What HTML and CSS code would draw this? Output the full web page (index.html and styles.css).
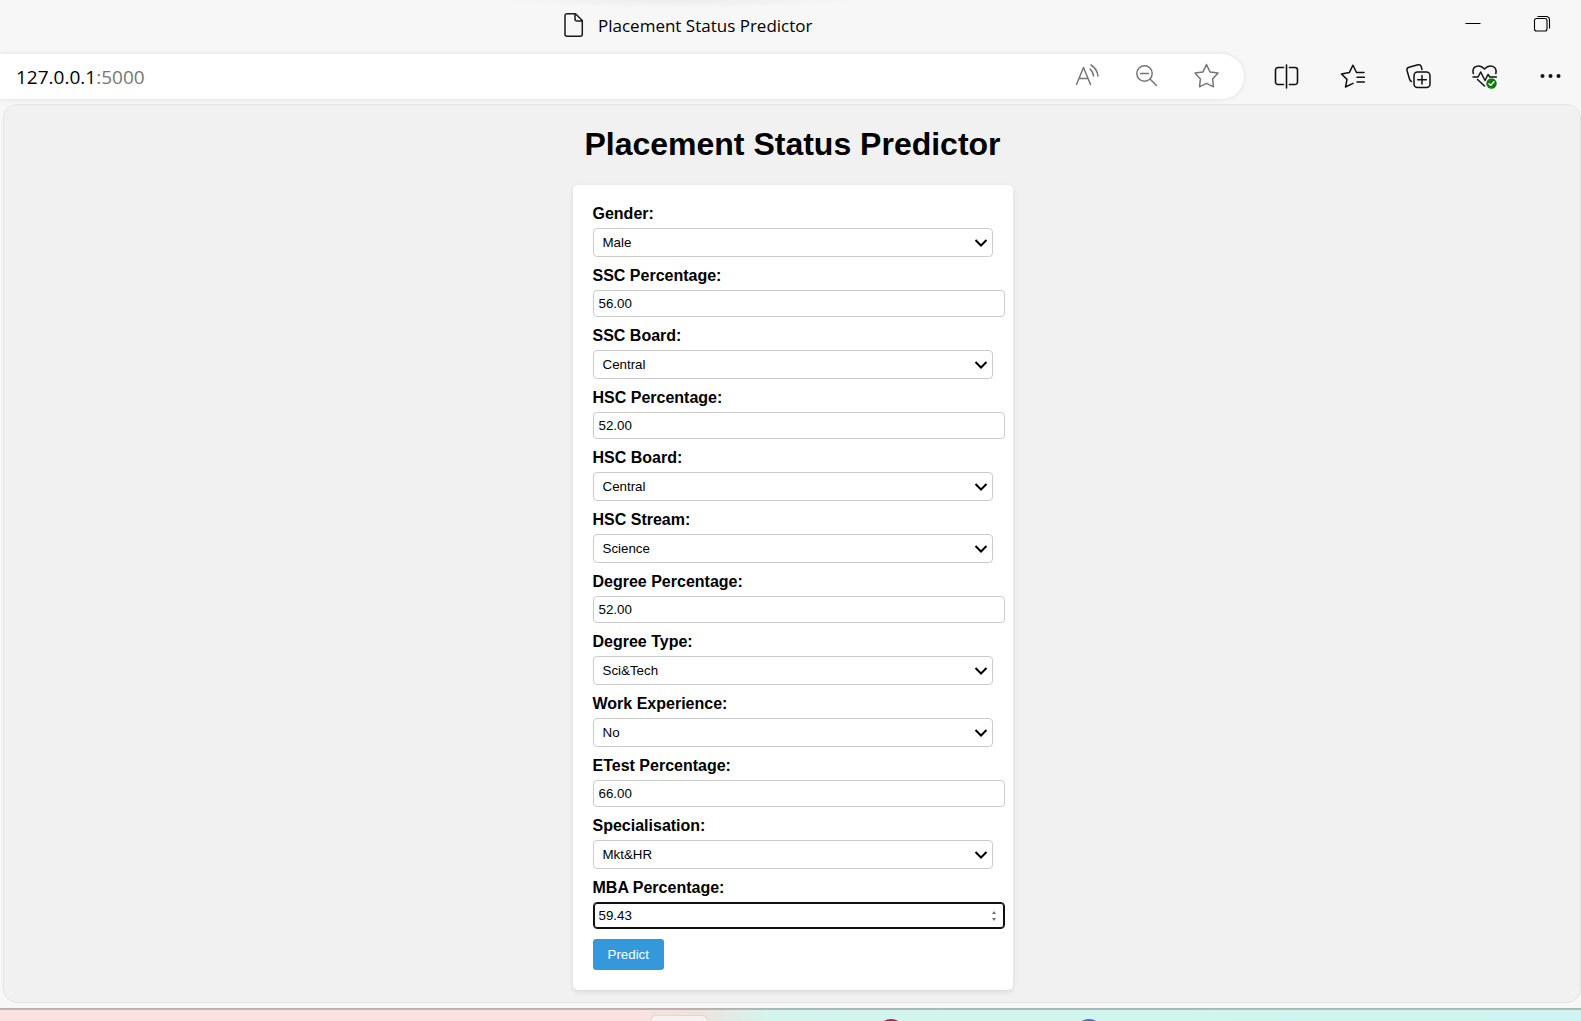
FILE: index.html
```html
<!DOCTYPE html>
<html lang="en">
<head>
<meta charset="utf-8">
<title>Placement Status Predictor</title>
<link rel="stylesheet" href="styles.css">
</head>
<body>
<header class="browser">
  <div class="titlebar">
    <div class="tab">
      <svg width="20" height="26" viewBox="0 0 20 26" fill="none" stroke="#1b1b1b" stroke-width="1.5" stroke-linejoin="round"><path d="M3 1.7H11.5L18.3 8.5V22.3A2 2 0 0 1 16.300 24.300H3A2 2 0 0 1 1 22.300V3.700A2 2 0 0 1 3 1.700ZM11 1.700V7A2 2 0 0 0 13 9H18.300"/></svg>
      <span>Placement Status Predictor</span>
    </div>
    <div class="window-buttons">
      <button type="button" aria-label="Minimize"><svg width="18" height="18" viewBox="0 0 18 18"><path d="M1.500 8.500H16.500" stroke="#000"/></svg></button>
      <button type="button" aria-label="Restore"><svg width="18" height="18" viewBox="0 0 18 18" fill="none" stroke="#000" stroke-width="1.100"><rect x="1.500" y="3.500" width="12.500" height="12.500" rx="2"/><path d="M4.500 1.500H13A3.500 3.500 0 0 1 16.500 5V13.500"/></svg></button>
    </div>
  </div>
  <div class="toolbar">
    <div class="address">
      <div class="url">127.0.0.1<span class="port">:5000</span></div>
      <button type="button" aria-label="Read aloud"><svg width="26" height="26" viewBox="0 0 26 26" fill="none" stroke="#767676" stroke-width="1.500" stroke-linecap="round" stroke-linejoin="round"><path d="M2.500 21.500L9.500 4.500L16.500 21.500M5 15.500H14M16 6Q19 8.500 19.500 13M17 2Q23 5.500 24 13"/></svg></button>
      <button type="button" aria-label="Zoom out"><svg width="26" height="26" viewBox="0 0 26 26" fill="none" stroke="#767676" stroke-width="1.500" stroke-linecap="round"><circle cx="10.500" cy="10.500" r="7.700"/><path d="M6.500 10.500H14.500M16 16L22.500 22.500"/></svg></button>
      <button type="button" aria-label="Add to favorites"><svg width="26" height="26" viewBox="0 0 26 26" fill="none" stroke="#767676" stroke-width="1.500" stroke-linejoin="round"><path d="M12.500 1.500L16 8.900L24 10.100L18.600 16L19.500 23.800L12.500 20.300L5.500 23.800L6.400 16L1 10.100L9 8.900Z"/></svg></button>
    </div>
    <nav class="tools" aria-label="Browser tools">
      <button type="button" aria-label="Split screen"><svg width="26" height="26" viewBox="0 0 26 26" fill="none" stroke="#111" stroke-width="1.600" stroke-linecap="round"><path d="M13.500 2V25M10.500 4.500H5A2.500 2.500 0 0 0 2.500 7V19A2.500 2.500 0 0 0 5 21.500H10.500M16.500 4.500H22A2.500 2.500 0 0 1 24.500 7V19A2.500 2.500 0 0 1 22 21.500H16.500"/></svg></button>
      <button type="button" aria-label="Favorites"><svg width="26" height="26" viewBox="0 0 26 26" fill="none" stroke="#111" stroke-width="1.500" stroke-linecap="round" stroke-linejoin="round"><path d="M25 9.500H17.500L14 2.200L10.300 9.600L2.500 11L8 16.400L6.500 24L14 20.300M18 14.300H25.500M18 19H25.500"/></svg></button>
      <button type="button" aria-label="Collections"><svg width="26" height="26" viewBox="0 0 26 26" fill="none" stroke="#111" stroke-width="1.500" stroke-linecap="round"><path d="M6.500 18.500Q5 18 4.500 16L2 7.500Q1.500 5 4 4.300L13 1.800Q15.500 1.300 16.200 3.500L17 6.500"/><rect x="9" y="9" width="16" height="15.500" rx="3.500"/><path d="M17 12.500V21M12.700 16.800H21.300"/></svg></button>
      <button type="button" aria-label="Browser essentials"><svg width="26" height="26" viewBox="0 0 26 26" fill="none" stroke="#111" stroke-width="1.500" stroke-linecap="round" stroke-linejoin="round"><path d="M2.300 10.500C.5 3 8.500 .5 13.500 6C18.500 .5 26.500 3 24.800 10.500M2 14H7L9.700 9L14 17.500L17 11.500L18.800 14H25.500M6.500 16.500L13.500 23"/><circle cx="20.500" cy="20.500" r="5.200" fill="#107c10" stroke="none"/><path d="M18 20.700L19.800 22.300L23 18.800" stroke="#fff" stroke-width="1.300"/></svg></button>
      <button type="button" aria-label="Settings and more"><svg width="26" height="26" viewBox="0 0 26 26" fill="#111"><circle cx="5.500" cy="13" r="2"/><circle cx="13.500" cy="13" r="2"/><circle cx="21.500" cy="13" r="2"/></svg></button>
    </nav>
  </div>
</header>

<main class="page">
  <h1>Placement Status Predictor</h1>
  <form class="card">
    <label for="gender">Gender:</label>
    <select id="gender"><option>Male</option><option>Female</option></select>
    <label for="ssc">SSC Percentage:</label>
    <input id="ssc" type="number" step="0.01" value="56.00">
    <label for="ssc-board">SSC Board:</label>
    <select id="ssc-board"><option>Central</option><option>Others</option></select>
    <label for="hsc">HSC Percentage:</label>
    <input id="hsc" type="number" step="0.01" value="52.00">
    <label for="hsc-board">HSC Board:</label>
    <select id="hsc-board"><option>Central</option><option>Others</option></select>
    <label for="stream">HSC Stream:</label>
    <select id="stream"><option>Science</option><option>Commerce</option><option>Arts</option></select>
    <label for="degree">Degree Percentage:</label>
    <input id="degree" type="number" step="0.01" value="52.00">
    <label for="degree-type">Degree Type:</label>
    <select id="degree-type"><option>Sci&amp;Tech</option><option>Comm&amp;Mgmt</option><option>Others</option></select>
    <label for="work">Work Experience:</label>
    <select id="work"><option>No</option><option>Yes</option></select>
    <label for="etest">ETest Percentage:</label>
    <input id="etest" type="number" step="0.01" value="66.00">
    <label for="spec">Specialisation:</label>
    <select id="spec"><option>Mkt&amp;HR</option><option>Mkt&amp;Fin</option></select>
    <label for="mba">MBA Percentage:</label>
    <input id="mba" class="active" type="number" step="0.01" value="59.43">
    <button class="predict" type="submit">Predict</button>
  </form>
</main>

<footer class="taskbar">
  <span class="task-tile"></span>
  <span class="task-dot task-dot-red"></span>
  <span class="task-dot task-dot-blue"></span>
</footer>
</body>
</html>
```
FILE: styles.css
```css
body {
  margin: 0;
  min-height: 100vh;
  display: flex;
  flex-direction: column;
  background: #f7f7f7;
  font-family: "Liberation Sans", Arial, sans-serif;
  color: #000;
}

/* Browser frame */
.browser {
  font-family: "Open Sans", "Noto Sans", sans-serif;
}

.browser button {
  display: flex;
  align-items: center;
  justify-content: center;
  padding: 0;
  border: 0;
  background: none;
}

.titlebar {
  display: flex;
  justify-content: space-between;
  height: 54px;
  padding: 0 5px 0 564px;
  background: radial-gradient(ellipse 180px 8px at 43% 0, #ececec, #f7f7f7);
}

.tab {
  display: flex;
  align-items: center;
  gap: 14px;
  height: 49px;
  font-size: 17px;
  white-space: nowrap;
}

.tab span {
  padding-top: 2px;
}

.window-buttons {
  display: flex;
  height: 48px;
}

.window-buttons button {
  width: 69px;
}

.toolbar {
  display: flex;
  gap: 7px;
  height: 45px;
}

.address {
  flex: 1;
  display: flex;
  padding: 0 7px 0 16px;
  border-radius: 0 23px 23px 0;
  background: #fff;
  box-shadow: 0 0 5px rgba(0, 0, 0, 0.1);
}

.address button {
  width: 60px;
  height: 44px;
}

.url {
  flex: 1;
  font-size: 19px;
  line-height: 46px;
}

.port {
  color: #767676;
}

.tools {
  display: flex;
}

.tools button {
  width: 66px;
  height: 44px;
  padding-left: 3px;
}

/* Page */
.page {
  flex: 1;
  margin: 5px 0 5px 3px;
  padding: 0 0 12px 1px;
  border: 1px solid #e4e4e4;
  border-radius: 14px;
  background: #f1f1f1;
}

h1 {
  margin: 21px 0 22px;
  font-size: 32px;
  line-height: 37px;
  text-align: center;
}

.card {
  width: 400px;
  margin: 0 auto;
  padding: 20px;
  border-radius: 5px;
  background: #fff;
  box-shadow: 0 2px 5px rgba(0, 0, 0, 0.1);
}

label {
  display: block;
  margin-bottom: 5px;
  font-size: 16px;
  font-weight: bold;
  line-height: 18px;
}

select,
input {
  display: block;
  width: 100%;
  margin: 0 0 10px;
  padding: 5px;
  border: 1px solid #ccc;
  border-radius: 4px;
  background: #fff;
  color: #000;
  font-family: inherit;
}

select {
  appearance: none;
  height: 29px;
  padding: 5px 24px 5px 9px;
  background: #fff url("data:image/svg+xml,%3Csvg xmlns='http://www.w3.org/2000/svg' width='14' height='10'%3E%3Cpath d='M1.500 2L7 7.500L12.500 2' fill='none' stroke='%23000' stroke-width='2'/%3E%3C/svg%3E") no-repeat right 4px center;
}

input {
  box-sizing: content-box;
  height: 15px;
}

input::-webkit-inner-spin-button {
  appearance: none;
}

.active {
  border-color: #101010;
  box-shadow: inset 0 0 0 1px #101010;
}

.active::-webkit-inner-spin-button {
  width: 10px;
  height: 15px;
  opacity: 1;
  background: url("data:image/svg+xml,%3Csvg xmlns='http://www.w3.org/2000/svg' width='10' height='15'%3E%3Cpath d='M3 6L5 3L7 6ZM3 10L5 13L7 10Z' fill='%23707070'/%3E%3C/svg%3E") no-repeat;
}

.predict {
  display: block;
  padding: 8px 15px;
  border: 0;
  border-radius: 3px;
  background: #3498db;
  color: #fff;
  font-family: inherit;
  line-height: 15px;
}

/* Desktop taskbar */
.taskbar {
  position: relative;
  height: 11px;
  overflow: hidden;
  border-top: 2px solid rgba(110, 100, 100, 0.4);
  background: linear-gradient(90deg, #f9e3e1 40%, #efe2dd 44%, #d3f5ee 49%, #cef5f0);
}

.task-tile,
.task-dot {
  position: absolute;
}

.task-tile {
  left: 651px;
  top: 6px;
  width: 56px;
  height: 40px;
  border-radius: 5px;
  background: #f8f1ef;
  box-shadow: 0 0 2px rgba(0, 0, 0, 0.2);
}

.task-dot {
  top: 9px;
  width: 28px;
  height: 28px;
  border-radius: 50%;
}

.task-dot-red {
  left: 877px;
  background: #b71c5a;
}

.task-dot-blue {
  left: 1075px;
  background: #5566b5;
}
```
